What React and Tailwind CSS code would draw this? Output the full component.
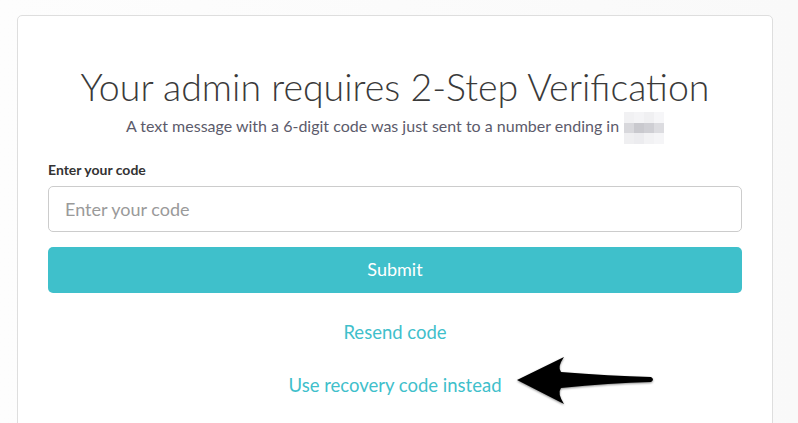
import React from "react";

function BlurredDigits() {
  // pixelated block that hides the last digits of the phone number
  const cells = [
    ["#f1f1f3", "#f4f4f6", "#f0f0f2", "#f6f6f8"],
    ["#d8d8dc", "#c9c9ce", "#cfcfd4", "#dcdce0"],
    ["#efeff1", "#ececef", "#f2f2f4", "#f5f5f7"],
  ];
  return (
    <span className="inline-grid grid-cols-4 align-middle ml-[5px] -my-[5px]">
      {cells.flat().map((c, i) => (
        <span key={i} className="block w-[10px] h-[10.7px]" style={{ background: c }} />
      ))}
    </span>
  );
}

function Arrow() {
  return (
    <svg
      className="absolute left-0 top-0 pointer-events-none"
      width="798"
      height="423"
      viewBox="0 0 798 423"
    >
      <defs>
        <filter id="sh" x="-20%" y="-40%" width="140%" height="180%">
          <feDropShadow dx="0" dy="1" stdDeviation="1.2" floodColor="#000" floodOpacity="0.45" />
        </filter>
      </defs>
      <path
        d="M517 380 L564 357 Q557 367 561 372 Q610 376 651 377 Q655 379.5 651 382 Q610 383 561 388 Q557 393 564 404 Z"
        fill="#000"
        filter="url(#sh)"
      />
    </svg>
  );
}

export default function App() {
  return (
    <div
      className="relative w-[798px] h-[423px] overflow-hidden bg-gradient-to-r from-[#fdfdfd] to-[#f9f9f9] pt-[15px] pl-[17px]"
      style={{ fontFamily: "Lato, 'Open Sans', sans-serif" }}
    >
      <div className="w-[756px] h-[440px] bg-white border border-[#dedede] rounded-[5px] px-[30px]">
        {/* Heading */}
        <h1 className="mt-[47px] text-center text-[37.5px] leading-[48px] font-light text-[#3a3a3a]">
          Your admin requires 2-Step Verification
        </h1>

        {/* Description */}
        <p className="mt-[4px] text-center text-[16px] leading-[22px] text-[#5c5b6b]">
          A text message with a 6-digit code was just sent to a number ending in
          <BlurredDigits />
        </p>

        {/* Form */}
        <label className="block mt-[22px] text-[14px] leading-[18px] font-bold text-[#333]">
          Enter your code
        </label>
        <input
          className="mt-[7px] w-full h-[46px] rounded-[5px] border border-[#cccccc] px-4 text-[18px] text-[#333] placeholder:text-[#9a9a9a] outline-none"
          placeholder="Enter your code"
        />
        <button className="mt-[15px] w-full h-[46px] rounded-[5px] bg-[#3fc0cb] text-white text-[18px]">
          Submit
        </button>

        {/* Links */}
        <div className="flex flex-col items-center mt-[28px] gap-[31px] text-[18.5px] leading-[22px] text-[#3fc0cb]">
          <a href="#">Resend code</a>
          <a href="#">Use recovery code instead</a>
        </div>
      </div>
      <Arrow />
    </div>
  );
}
